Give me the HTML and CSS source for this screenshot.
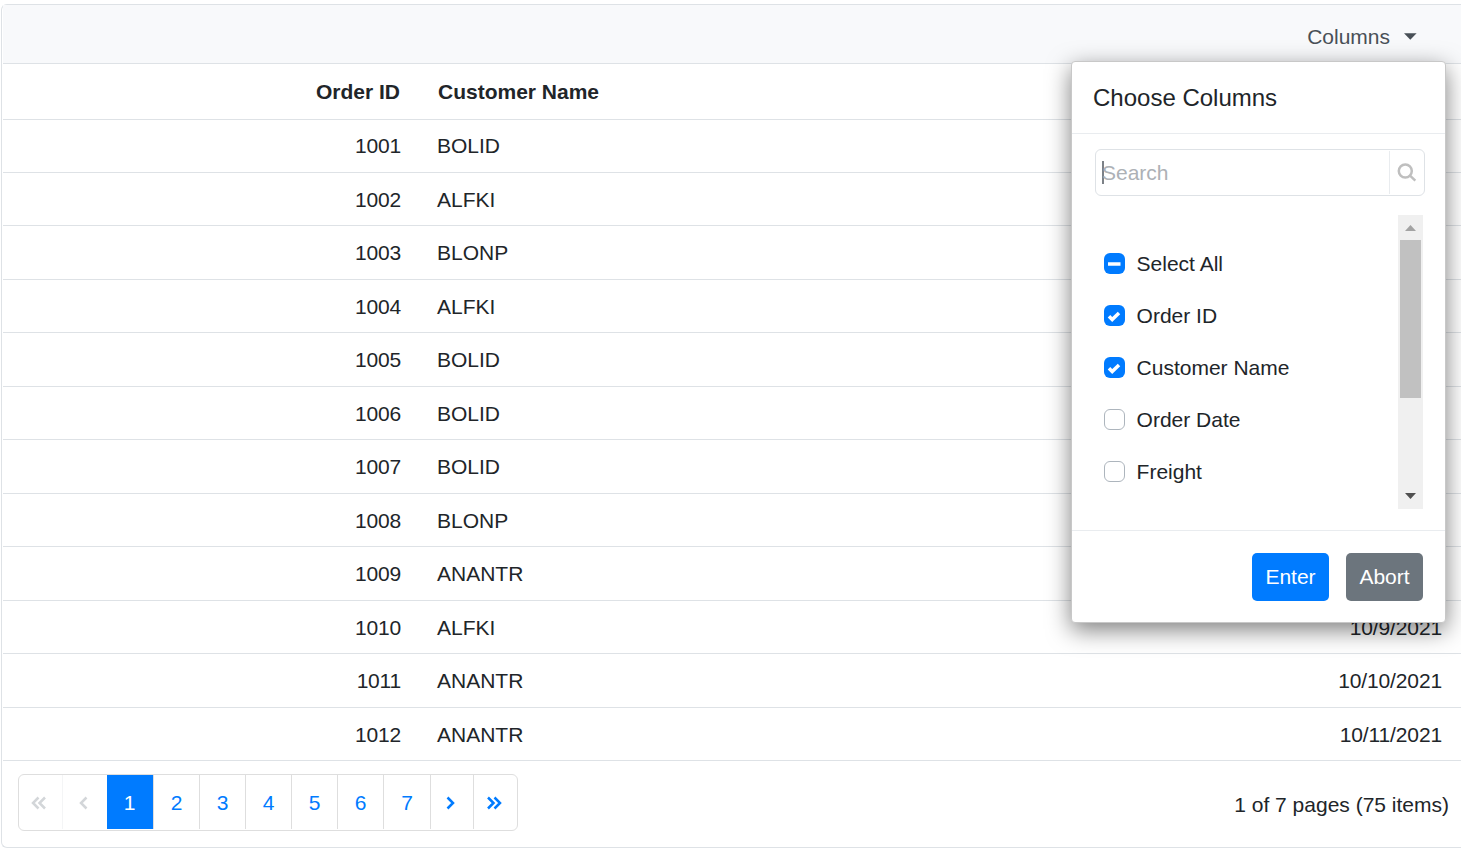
FILE: index.html
```html
<!DOCTYPE html>
<html lang="en">
<head>
<meta charset="utf-8">
<title>Orders</title>
<link rel="stylesheet" href="styles.css">
</head>
<body>
<div class="grid">
  <div class="toolbar">
    <button class="columns-btn">Columns <svg width="13" height="7" viewBox="0 0 13 7"><path d="M0 0.3h12.6L6.3 6.8z" fill="#495057"/></svg></button>
  </div>
  <div class="row head"><span class="id">Order ID</span><span class="name">Customer Name</span><span class="date"></span></div>
  <div class="rows">
    <div class="row"><span class="id">1001</span><span class="name">BOLID</span><span class="date"></span></div>
    <div class="row"><span class="id">1002</span><span class="name">ALFKI</span><span class="date"></span></div>
    <div class="row"><span class="id">1003</span><span class="name">BLONP</span><span class="date"></span></div>
    <div class="row"><span class="id">1004</span><span class="name">ALFKI</span><span class="date"></span></div>
    <div class="row"><span class="id">1005</span><span class="name">BOLID</span><span class="date"></span></div>
    <div class="row"><span class="id">1006</span><span class="name">BOLID</span><span class="date"></span></div>
    <div class="row"><span class="id">1007</span><span class="name">BOLID</span><span class="date"></span></div>
    <div class="row"><span class="id">1008</span><span class="name">BLONP</span><span class="date"></span></div>
    <div class="row"><span class="id">1009</span><span class="name">ANANTR</span><span class="date"></span></div>
    <div class="row"><span class="id">1010</span><span class="name">ALFKI</span><span class="date">10/9/2021</span></div>
    <div class="row"><span class="id">1011</span><span class="name">ANANTR</span><span class="date">10/10/2021</span></div>
    <div class="row"><span class="id">1012</span><span class="name">ANANTR</span><span class="date">10/11/2021</span></div>
  </div>
  <div class="pager">
    <div class="pages">
      <span class="page first off"><svg width="16" height="14" viewBox="0 0 16 14"><path d="M7.500 1.500L2 7l5.500 5.500M14 1.500L8.500 7l5.500 5.500"/></svg></span>
      <span class="page prev off"><svg width="10" height="14" viewBox="0 0 10 14"><path d="M7.500 1.500L2 7l5.500 5.500"/></svg></span>
      <span class="page active">1</span>
      <span class="page">2</span>
      <span class="page">3</span>
      <span class="page">4</span>
      <span class="page">5</span>
      <span class="page">6</span>
      <span class="page seven">7</span>
      <span class="page next"><svg width="10" height="14" viewBox="0 0 10 14"><path d="M2.500 1.500L8 7l-5.500 5.500"/></svg></span>
      <span class="page last"><svg width="16" height="14" viewBox="0 0 16 14"><path d="M2 1.500L7.500 7L2 12.500M8.500 1.500L14 7l-5.500 5.500"/></svg></span>
    </div>
    <span class="info">1 of 7 pages (75 items)</span>
  </div>
</div>

<div class="popup">
  <div class="title">Choose Columns</div>
  <div class="body">
    <div class="search">
      <span class="field"><span class="caret"></span>Search</span>
      <span class="search-icon"><svg width="20" height="20" viewBox="0 0 20 20"><circle cx="8.300" cy="8" r="6.500"/><path d="M13 12.700l5.300 5"/></svg></span>
    </div>
    <div class="chooser">
      <div class="list">
        <div class="item"><span class="box on"><svg width="21" height="21" viewBox="0 0 21 21"><path class="dash" d="M4 11h12.500"/></svg></span>Select All</div>
        <div class="item"><span class="box on"><svg width="21" height="21" viewBox="0 0 21 21"><path class="tick" d="M5 11.300l3.200 3.200 6.800-6.600"/></svg></span>Order ID</div>
        <div class="item"><span class="box on"><svg width="21" height="21" viewBox="0 0 21 21"><path class="tick" d="M5 11.300l3.200 3.200 6.800-6.600"/></svg></span>Customer Name</div>
        <div class="item"><span class="box"></span>Order Date</div>
        <div class="item"><span class="box"></span>Freight</div>
      </div>
      <div class="scrollbar">
        <svg width="11" height="6" viewBox="0 0 11 6"><path d="M0 6h11L5.500 0z" fill="#a3a3a3"/></svg>
        <div class="thumb"></div>
        <svg width="11" height="6" viewBox="0 0 11 6"><path d="M0 0h11L5.500 6z" fill="#505050"/></svg>
      </div>
    </div>
  </div>
  <div class="footer"><button class="btn enter">Enter</button><button class="btn abort">Abort</button></div>
</div>
</body>
</html>
```
FILE: styles.css
```css
* { box-sizing: border-box; }
body {
  margin: 0;
  height: 850px;
  overflow: hidden;
  position: relative;
  background: #fff;
  color: #212529;
  font: 21px/30px "Liberation Sans", Arial, sans-serif;
}
button { font: inherit; border: 0; background: none; padding: 0; }
svg { display: block; fill: none; flex: none; }
.grid {
  margin: 4px 0 0 1px;
  height: 844px;
  padding-left: 1px;
  border: 1px solid #dee2e6;
  border-right: 0;
  border-radius: 6px 0 0 6px;
}
.toolbar {
  height: 59px;
  background: #f8f9fb;
  border-bottom: 1px solid #dee2e6;
  display: flex;
  justify-content: flex-end;
  align-items: center;
  padding: 5px 44px 0 0;
}
.columns-btn { display: flex; align-items: center; gap: 14px; color: #495057; }
.row {
  height: 53px;
  display: grid;
  grid-template-columns: 398px 1fr 400px;
  align-items: center;
  border-bottom: 1px solid #dee2e6;
}
.rows .row:nth-child(2n+3) { height: 54px; }
.rows .row:nth-child(2n) { padding-top: 2px; }
.row.head { height: 56px; font-weight: bold; }
.id { text-align: right; }
.rows .id { letter-spacing: -0.2px; }
.head .id { padding-right: 1px; }
.name { padding-left: 36px; }
.head .name { padding-left: 37px; }
.date { text-align: right; padding-right: 19px; letter-spacing: -0.13px; }
.pager {
  height: 86px;
  display: flex;
  justify-content: space-between;
  align-items: flex-start;
  padding: 13px 12px 0 15px;
}
.pages {
  height: 57px;
  display: flex;
  border: 1px solid #dedede;
  border-radius: 6px;
  color: #007bff;
}
.page {
  width: 46px;
  height: 54px;
  display: flex;
  align-items: center;
  justify-content: center;
  padding-top: 1px;
  border-right: 1px solid #dedede;
}
.page svg { stroke: currentColor; stroke-width: 2.5; }
.first { width: 44px; padding-right: 3px; }
.prev { width: 44px; padding-right: 2px; }
.off { color: #d3d6d9; border-color: #f4f5f6; }
.prev, .last { border-right: 0; }
.active { width: 47px; padding-right: 1px; background: #007bff; background-clip: padding-box; color: #fff; }
.seven { width: 47px; }
.next { width: 43px; padding-right: 4px; }
.last { width: 43px; padding-right: 4px; }
.info { margin-top: 16px; }
.popup {
  position: absolute;
  left: 1071px;
  top: 61px;
  width: 375px;
  height: 562px;
  background: #fff;
  border: 1px solid #c8c8c8;
  border-radius: 4px;
  box-shadow: 0 7px 23px rgba(0, 0, 0, .5);
  display: flex;
  flex-direction: column;
}
.title { height: 72px; padding: 21px; font-size: 24px; border-bottom: 1px solid #e9ecef; }
.body { height: 396px; padding: 15px 20px 0 23px; }
.search {
  height: 47px;
  border: 1px solid #dee2e6;
  border-radius: 6px;
  display: flex;
  color: #adb1b6;
}
.field { flex: 1; display: flex; align-items: center; padding-left: 6px; }
.caret { width: 2px; height: 23px; margin-right: -2px; background: #7c8187; }
.search-icon {
  width: 35px;
  margin: 1px 0;
  padding-right: 1px;
  border-left: 1px solid #e9ecef;
  display: flex;
  align-items: center;
  justify-content: center;
}
.search-icon svg { stroke: #bfbfbf; stroke-width: 2.5; }
.chooser { display: flex; justify-content: space-between; margin-top: 19px; padding-right: 2px; height: 294px; }
.list { padding: 23px 0 0 9px; }
.item { height: 52px; display: flex; align-items: center; gap: 11.6px; }
.box { width: 21px; height: 21px; margin-bottom: 1px; border: 1px solid #adb5bd; border-radius: 6px; }
.box.on { border: 0; background: #007bff; }
.dash { stroke: #fff; stroke-width: 3.5; }
.tick { stroke: #fff; stroke-width: 3.5; }
.scrollbar { width: 25px; background: #f0f0f0; display: flex; flex-direction: column; align-items: center; padding-top: 10px; }
.thumb { width: 21px; height: 158px; margin: 9px 0 95px; background: #c1c1c1; }
.footer {
  flex: 1;
  border-top: 1px solid #e9ecef;
  display: flex;
  justify-content: flex-end;
  gap: 17px;
  padding: 22px 22px 0 0;
}
.btn { width: 77px; height: 48px; border-radius: 5px; color: #fff; }
.enter { background: #007bff; }
.abort { background: #6c757d; }
```
